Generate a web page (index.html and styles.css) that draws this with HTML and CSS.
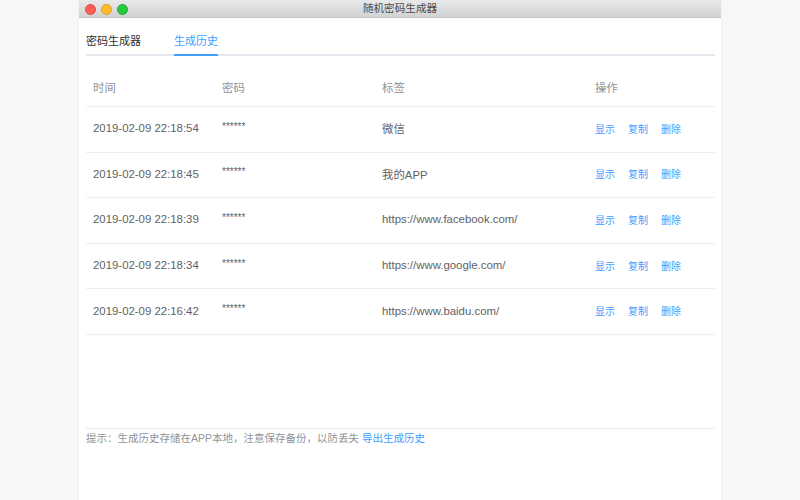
FILE: index.html
```html
<!DOCTYPE html>
<html lang="zh">
<head>
<meta charset="utf-8">
<title>随机密码生成器</title>
<link rel="stylesheet" href="styles.css">
</head>
<body>
<div class="window">
  <div class="titlebar">
    <div class="lights">
      <span class="light red"></span>
      <span class="light yellow"></span>
      <span class="light green"></span>
    </div>
    <div class="title">随机密码生成器</div>
    <div></div>
  </div>
  <div class="content">
    <div class="tabs">
      <div class="tab">密码生成器</div>
      <div class="tab active">生成历史</div>
    </div>
    <div class="table">
      <div class="row head">
        <div class="cell">时间</div>
        <div class="cell">密码</div>
        <div class="cell">标签</div>
        <div class="cell">操作</div>
      </div>
      <div class="row">
        <div class="cell">2019-02-09 22:18:54</div>
        <div class="cell pw">******</div>
        <div class="cell">微信</div>
        <div class="cell ops"><span>显示</span><span>复制</span><span>删除</span></div>
      </div>
      <div class="row">
        <div class="cell">2019-02-09 22:18:45</div>
        <div class="cell pw">******</div>
        <div class="cell">我的APP</div>
        <div class="cell ops"><span>显示</span><span>复制</span><span>删除</span></div>
      </div>
      <div class="row">
        <div class="cell">2019-02-09 22:18:39</div>
        <div class="cell pw">******</div>
        <div class="cell">https://www.facebook.com/</div>
        <div class="cell ops"><span>显示</span><span>复制</span><span>删除</span></div>
      </div>
      <div class="row">
        <div class="cell">2019-02-09 22:18:34</div>
        <div class="cell pw">******</div>
        <div class="cell">https://www.google.com/</div>
        <div class="cell ops"><span>显示</span><span>复制</span><span>删除</span></div>
      </div>
      <div class="row">
        <div class="cell">2019-02-09 22:16:42</div>
        <div class="cell pw">******</div>
        <div class="cell">https://www.baidu.com/</div>
        <div class="cell ops"><span>显示</span><span>复制</span><span>删除</span></div>
      </div>
    </div>
    <div class="footer">提示：生成历史存储在APP本地，注意保存备份，以防丢失 <span class="link">导出生成历史</span></div>
  </div>
</div>
</body>
</html>
```

FILE: styles.css
```css
html, body {
  margin: 0;
  padding: 0;
}
body {
  background: #f7f7f7;
  display: flex;
  justify-content: center;
  font-family: "Liberation Sans", "Noto Sans CJK SC", sans-serif;
}
.window {
  width: 642px;
  height: 500px;
  background: #ffffff;
  display: flex;
  flex-direction: column;
  box-shadow: 0 0 1px rgba(0,0,0,0.15);
}
.titlebar {
  height: 17px;
  border-bottom: 1px solid #c4c4c4;
  background: linear-gradient(#e9e9e9, #d2d2d2);
  display: grid;
  grid-template-columns: 1fr auto 1fr;
  align-items: center;
}
.lights {
  display: flex;
  gap: 5px;
  padding-left: 6px;
  padding-top: 1px;
}
.light {
  width: 11px;
  height: 11px;
  border-radius: 50%;
  box-sizing: border-box;
}
.red { background: #fc5f57; border: 1px solid #e2463f; }
.yellow { background: #fdbc2e; border: 1px solid #e1a116; }
.green { background: #28c840; border: 1px solid #14ae2b; }
.title {
  font-size: 10.6px;
  line-height: 17px;
  color: #4a4a4a;
}
.content {
  flex: 1;
  display: flex;
  flex-direction: column;
  padding: 0 6px 0 7px;
}
.tabs {
  display: flex;
  gap: 33px;
  border-bottom: 2px solid #e4e7ed;
}
.tab {
  font-size: 11px;
  line-height: 22px;
  padding-top: 12px;
  padding-bottom: 2px;
  color: #303133;
  margin-bottom: -2px;
  border-bottom: 2px solid transparent;
}
.tab.active {
  color: #409eff;
  border-bottom-color: #409eff;
}
.table {
  margin-top: 12px;
}
.row {
  display: grid;
  grid-template-columns: 129px 160px 213px 1fr;
  align-items: center;
  height: 45.6px;
  box-sizing: border-box;
  border-bottom: 1px solid #ebeef5;
  padding-bottom: 2px;
  font-size: 11.4px;
  color: #606266;
}
.row.head {
  height: 39px;
  padding-bottom: 0;
  color: #909399;
}
.cell {
  padding-left: 7px;
  white-space: nowrap;
}
.pw {
  font-size: 10px;
  padding-bottom: 4px;
}
.ops {
  display: flex;
  gap: 13px;
  font-size: 10px;
  color: #409eff;
}
.footer {
  margin-top: auto;
  height: 72px;
  box-sizing: border-box;
  border-top: 1px solid #e6e9f0;
  padding-top: 1px;
  font-size: 10.5px;
  line-height: 16px;
  color: #909399;
}
.link {
  color: #409eff;
}
```
